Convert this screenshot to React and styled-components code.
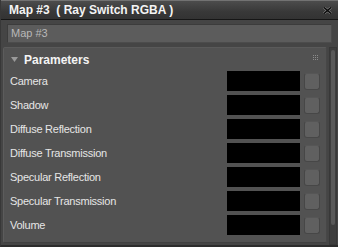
import React from "react";
import styled, { createGlobalStyle } from "styled-components";

const Global = createGlobalStyle`
  html, body { margin: 0; padding: 0; background: #444; }
  body { font-family: "Liberation Sans", Arial, sans-serif; }
`;

const Window = styled.div`
  width: 338px;
  height: 247px;
  box-sizing: border-box;
  background: #454545;
  display: flex;
  flex-direction: column;
  border-left: 1px solid #383838;
  border-bottom: 2px solid #2c2c2c;
  overflow: hidden;
`;

const TitleBar = styled.div`
  height: 20px;
  box-sizing: border-box;
  background: linear-gradient(#4c4c4c, #383838 60%, #333333);
  border-top: 1px solid #727272;
  border-bottom: 1px solid #161616;
  display: flex;
  align-items: center;
  justify-content: space-between;
  padding: 0 6px 0 8px;
`;

const Title = styled.span`
  color: #f4f4f4;
  font-weight: bold;
  font-size: 12px;
  white-space: pre;
  line-height: 18px;
`;

const Close = styled.svg`
  width: 9px;
  height: 7px;
  margin-top: 1px;
`;

const NameField = styled.div`
  margin: 4px 6px 0 6px;
  height: 19px;
  box-sizing: border-box;
  background: #5c5c5c;
  border: 1px solid #3c3c3c;
  border-right-color: #4c4c4c;
  border-bottom-color: #4c4c4c;
  color: #b8b8b8;
  font-size: 11px;
  line-height: 17px;
  padding-left: 3px;
`;

const Body = styled.div`
  flex: 1;
  display: flex;
  gap: 2px;
  margin-top: 4px;
  padding-left: 2px;
  min-height: 0;
`;

const Panel = styled.div`
  width: 324px;
  box-sizing: border-box;
  background: #525252;
  border: 1px solid #5a5a5a;
  border-left-color: #5c5c5c;
  border-right-color: #474747;
  border-bottom-color: #404040;
  border-radius: 2px;
  display: flex;
  flex-direction: column;
  margin-bottom: 2px;
`;

const Header = styled.div`
  height: 23px;
  display: flex;
  align-items: center;
  padding: 0 7px 0 7px;
  gap: 6px;
`;

const Triangle = styled.svg`
  width: 7px;
  height: 5px;
`;

const HeaderText = styled.span`
  color: #f4f4f4;
  font-weight: bold;
  font-size: 12px;
  flex: 1;
`;

const Grip = styled.svg`
  width: 6px;
  height: 6px;
  margin-top: -4px;
`;

const Rows = styled.div`
  display: flex;
  flex-direction: column;
  gap: 4px;
`;

const Row = styled.div`
  height: 20px;
  display: flex;
  align-items: center;
  padding-left: 6px;
`;

const Label = styled.span`
  flex: 1;
  color: #e6e6e6;
  font-size: 11px;
  letter-spacing: -0.25px;
`;

const Swatch = styled.div`
  width: 73px;
  height: 20px;
  background: #000;
`;

const MiniButton = styled.div`
  width: 16px;
  height: 17px;
  box-sizing: border-box;
  margin: 1px 6px 0 4px;
  border-radius: 3px;
  background: #606060;
  border: 1px solid #474747;
  border-top-color: #565656;
`;

const Scrollbar = styled.div`
  width: 8px;
  box-sizing: border-box;
  background: #3e3e3e;
  border: 1px solid #383838;
  padding: 2px 1px;
  display: flex;
  flex-direction: column;
`;

const Thumb = styled.div`
  height: 175px;
  background: #595959;
  border-radius: 2px;
`;

const labels = [
  "Camera",
  "Shadow",
  "Diffuse Reflection",
  "Diffuse Transmission",
  "Specular Reflection",
  "Specular Transmission",
  "Volume",
];

export default function App() {
  return (
    <>
      <Global />
      <Window>
        <TitleBar>
          <Title>{"Map #3  ( Ray Switch RGBA )"}</Title>
          <Close viewBox="0 0 9 7">
            <path d="M1 0.5 L8 6.5 M8 0.5 L1 6.5" stroke="#8a8a8a" strokeWidth="2.6" />
            <path d="M1 0.5 L8 6.5 M8 0.5 L1 6.5" stroke="#0c0c0c" strokeWidth="1.6" />
          </Close>
        </TitleBar>
        <NameField>Map #3</NameField>
        <Body>
          <Panel>
            <Header>
              <Triangle viewBox="0 0 7 5">
                <path d="M0 0 H7 L3.5 5 Z" fill="#9a9a9a" />
              </Triangle>
              <HeaderText>Parameters</HeaderText>
              <Grip viewBox="0 0 6 6">
                {[0, 2, 4].map((y) =>
                  [0, 2, 4].map((x) => (
                    <rect key={`${x}-${y}`} x={x} y={y} width="1" height="1" fill="#8c8c8c" />
                  ))
                )}
              </Grip>
            </Header>
            <Rows>
              {labels.map((l) => (
                <Row key={l}>
                  <Label>{l}</Label>
                  <Swatch />
                  <MiniButton />
                </Row>
              ))}
            </Rows>
          </Panel>
          <Scrollbar>
            <Thumb />
          </Scrollbar>
        </Body>
      </Window>
    </>
  );
}
